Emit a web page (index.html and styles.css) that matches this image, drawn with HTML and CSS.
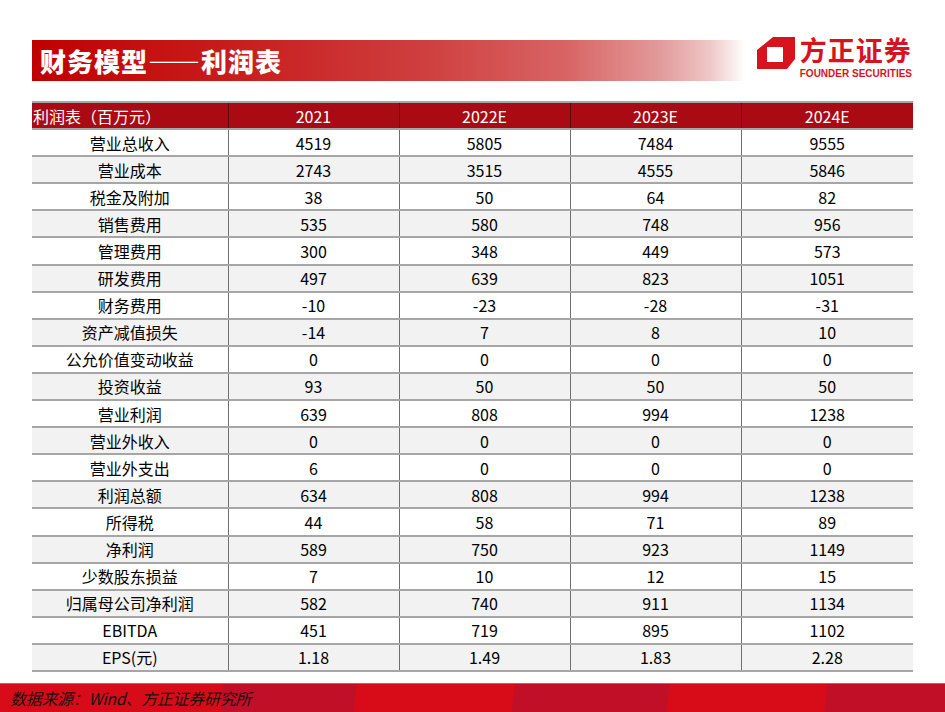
FILE: index.html
```html
<!DOCTYPE html>
<html lang="zh-CN">
<head>
<meta charset="utf-8">
<title>财务模型——利润表</title>
<link rel="stylesheet" href="styles.css">
</head>
<body>
<div class="page">
  <header class="top">
    <div class="title-bar"><h1 class="title">财务模型——利润表</h1></div>
    <div class="logo">
      <svg class="logo-mark" width="38" height="32" viewBox="0 0 38 32">
        <path fill="#d7141e" fill-rule="evenodd" d="M0 13 L16 0 L38 0 L38 22 L30 32 L0 32 Z M10 10 L10 25 L26 25 L26 10 Z"/>
      </svg>
      <div class="logo-text">
        <div class="logo-cn">方正证券</div>
        <div class="logo-en">FOUNDER SECURITIES</div>
      </div>
    </div>
  </header>

  <table class="fin">
    <thead>
      <tr><th class="first">利润表（百万元）</th><th>2021</th><th>2022E</th><th>2023E</th><th>2024E</th></tr>
    </thead>
    <tbody>
      <tr><td>营业总收入</td><td>4519</td><td>5805</td><td>7484</td><td>9555</td></tr>
      <tr><td>营业成本</td><td>2743</td><td>3515</td><td>4555</td><td>5846</td></tr>
      <tr><td>税金及附加</td><td>38</td><td>50</td><td>64</td><td>82</td></tr>
      <tr><td>销售费用</td><td>535</td><td>580</td><td>748</td><td>956</td></tr>
      <tr><td>管理费用</td><td>300</td><td>348</td><td>449</td><td>573</td></tr>
      <tr><td>研发费用</td><td>497</td><td>639</td><td>823</td><td>1051</td></tr>
      <tr><td>财务费用</td><td>-10</td><td>-23</td><td>-28</td><td>-31</td></tr>
      <tr><td>资产减值损失</td><td>-14</td><td>7</td><td>8</td><td>10</td></tr>
      <tr><td>公允价值变动收益</td><td>0</td><td>0</td><td>0</td><td>0</td></tr>
      <tr><td>投资收益</td><td>93</td><td>50</td><td>50</td><td>50</td></tr>
      <tr><td>营业利润</td><td>639</td><td>808</td><td>994</td><td>1238</td></tr>
      <tr><td>营业外收入</td><td>0</td><td>0</td><td>0</td><td>0</td></tr>
      <tr><td>营业外支出</td><td>6</td><td>0</td><td>0</td><td>0</td></tr>
      <tr><td>利润总额</td><td>634</td><td>808</td><td>994</td><td>1238</td></tr>
      <tr><td>所得税</td><td>44</td><td>58</td><td>71</td><td>89</td></tr>
      <tr><td>净利润</td><td>589</td><td>750</td><td>923</td><td>1149</td></tr>
      <tr><td>少数股东损益</td><td>7</td><td>10</td><td>12</td><td>15</td></tr>
      <tr><td>归属母公司净利润</td><td>582</td><td>740</td><td>911</td><td>1134</td></tr>
      <tr><td>EBITDA</td><td>451</td><td>719</td><td>895</td><td>1102</td></tr>
      <tr><td>EPS(元)</td><td>1.18</td><td>1.49</td><td>1.83</td><td>2.28</td></tr>
    </tbody>
  </table>

  <footer class="foot">
    <span class="source">数据来源：Wind、方正证券研究所</span>
  </footer>
</div>
</body>
</html>
```

FILE: styles.css
```css
* { box-sizing: border-box; }
html, body {
  margin: 0;
  padding: 0;
  background: #ffffff;
}
body {
  font-family: "Noto Sans CJK SC", "Noto Sans", sans-serif;
  color: #000;
}
.page {
  width: 945px;
  height: 712px;
  display: flex;
  flex-direction: column;
  overflow: hidden;
}
.top {
  display: flex;
  align-items: flex-start;
  padding: 37px 33px 0 32px;
  height: 81px;
}
.title-bar {
  margin-top: 3px;
  width: 713px;
  height: 41px;
  background: linear-gradient(90deg, #c00000 0%, #c81f1f 30%, #cf3f3f 55%, #d86464 75%, #e29a9a 88%, #efc6c6 95%, #ffffff 100%);
  padding-left: 8px;
  display: flex;
  align-items: center;
}
.title {
  margin: 0;
  font-size: 26px;
  font-weight: 900;
  color: #ffffff;
  letter-spacing: 1px;
  line-height: 1;
}
.logo {
  margin-left: 12px;
  display: flex;
  align-items: flex-start;
}
.logo-mark {
  display: block;
}
.logo-text {
  margin-left: 5px;
  margin-top: -2px;
  display: flex;
  flex-direction: column;
}
.logo-cn {
  font-size: 27px;
  font-weight: 700;
  color: #d7141e;
  line-height: 30px;
  letter-spacing: 1px;
  white-space: nowrap;
}
.logo-en {
  font-family: "Liberation Sans", Arial, sans-serif;
  font-size: 10px;
  font-weight: 700;
  color: #d7141e;
  line-height: 12px;
  margin-top: 3px;
  white-space: nowrap;
}

.fin {
  margin: 20px 0 0 32px;
  width: 881px;
  border-collapse: collapse;
  table-layout: fixed;
  font-size: 16px;
}
.fin th, .fin td {
  height: 27.1px;
  padding: 0;
  text-align: center;
  vertical-align: middle;
  line-height: 20px;
  border-bottom: 2px solid #a6a6a6;
  border-left: 1px solid #6f6f6f;
  white-space: nowrap;
}
.fin th:first-child, .fin td:first-child { border-left: none; }
.fin th:nth-child(1) { width: 196px; }
.fin th:nth-child(2), .fin th:nth-child(3), .fin th:nth-child(4) { width: 171px; }
.fin thead tr { border-top: 2px solid #a6a6a6; }
.fin th {
  background: #a90a14;
  color: #ffffff;
  font-weight: 400;
  border-left-color: #5a0a0a;
}
.fin th.first { text-align: left; padding-left: 1px; }
.fin tbody tr:nth-child(even) td { background: #f2f2f2; }

.foot {
  margin-top: auto;
  height: 29px;
  border-top: 1px solid #e6505c;
  background: linear-gradient(96deg,
    #d80c18 0px, #d80c18 222px,
    #c10f27 222px, #c10f27 355px,
    #d80c18 355px, #d80c18 512px,
    #c10f27 512px, #c10f27 666px,
    #d80c18 666px, #d80c18 823px,
    #c10f27 823px, #c10f27 100%);
  display: flex;
  align-items: center;
  padding-left: 10px;
}
.source {
  font-size: 16px;
  font-style: italic;
  color: #141414;
  letter-spacing: -0.3px;
}
```
